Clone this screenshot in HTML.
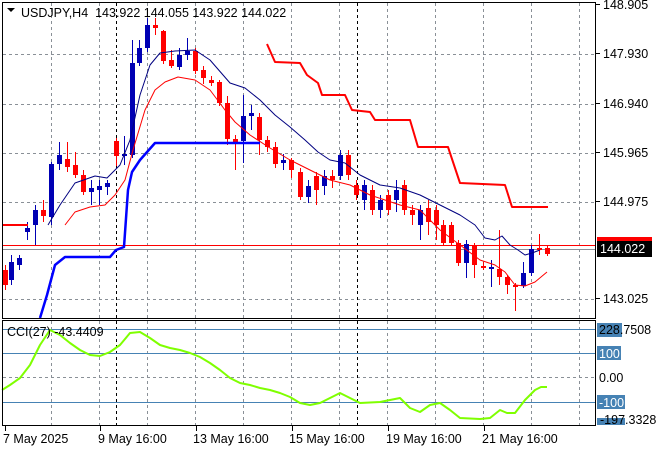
<!DOCTYPE html>
<html><head><meta charset="utf-8"><style>
html,body{margin:0;padding:0;background:#fff;width:660px;height:450px;overflow:hidden}
svg{display:block;font-family:"Liberation Sans",sans-serif}
</style></head><body>
<svg id="s" width="660" height="450" xmlns="http://www.w3.org/2000/svg">
<rect width="660" height="450" fill="#fff"/>
<g id="grid" stroke="#8a9097" stroke-width="1" stroke-dasharray="3,3"></g>
<g id="chart"></g>
<rect x="2.5" y="2.5" width="593" height="316" fill="none" stroke="#000"/>
<rect x="2.5" y="320.5" width="593" height="105" fill="none" stroke="#000"/>
<text x="21" y="17" font-size="12.5" fill="#000">USDJPY,H4&#160;&#160;143.922 144.055 143.922 144.022</text>
<path d="M7 8 L15 8 L11 12 Z" fill="#000"/>
<text x="7" y="336" font-size="12.5" fill="#000">CCI(27) -43.4409</text>
<g font-size="12.5" fill="#000" id="ax"></g>
</svg>
<script>
const NS="http://www.w3.org/2000/svg";
function el(p,t,a){const e=document.createElementNS(NS,t);for(const k in a)e.setAttribute(k,a[k]);p.appendChild(e);return e;}
const g=document.getElementById('grid'),c=document.getElementById('chart'),ax=document.getElementById('ax');
for(let x=51;x<596;x+=48){el(g,'line',{x1:x+.5,y1:3,x2:x+.5,y2:318});el(g,'line',{x1:x+.5,y1:321,x2:x+.5,y2:425});}
[54,104,153,202,299].forEach(y=>el(g,'line',{x1:3,y1:y+.5,x2:595,y2:y+.5}));
el(g,'line',{x1:3,y1:377.5,x2:595,y2:377.5});
[116,357].forEach(x=>{el(c,'line',{x1:x+.5,y1:3,x2:x+.5,y2:318,stroke:'#000','stroke-dasharray':'3,3'});el(c,'line',{x1:x+.5,y1:321,x2:x+.5,y2:425,stroke:'#000','stroke-dasharray':'3,3'});});
[329,353,402,425].forEach(y=>el(c,'line',{x1:3,y1:y+.5,x2:595,y2:y+.5,stroke:'#4682b4'}));
el(c,'line',{x1:3,y1:249.5,x2:595,y2:249.5,stroke:'#8a9097'});
el(c,'line',{x1:3,y1:245.5,x2:595,y2:245.5,stroke:'#ff0000'});
// candles x,o,c,h,l (y px)
const K=[[5,270,285,265,290],[11,280,262,255,285],[19,265,258,255,270],[27,232,228,222,240],[35,225,210,205,245],[43,210,216,200,222],[51,217,164,162,225],[59,164,155,142,170],[67,159,167,142,172],[75,165,175,152,178],[83,175,192,170,195],[91,192,188,180,205],[99,190,186,180,205],[107,187,183,180,195],[116,141,156,138,166],[124,156,154,136,165],[132,155,63,40,158],[139,63,48,40,66],[147,48,25,18,52],[155,25,28,18,35],[163,31,61,30,64],[171,60,66,50,68],[179,67,55,48,70],[187,55,51,38,60],[195,51,71,48,74],[203,70,78,66,84],[211,80,83,76,86],[219,82,103,80,106],[227,103,139,96,145],[235,139,142,135,170],[243,141,116,95,163],[251,116,113,105,130],[259,117,140,113,155],[267,140,147,136,152],[275,147,164,142,168],[283,163,160,154,170],[291,160,170,158,178],[300,172,197,168,200],[308,197,186,180,203],[316,176,190,172,205],[324,186,176,170,195],[332,176,180,170,188],[340,176,155,150,180],[348,155,175,150,180],[356,185,195,180,200],[364,200,185,180,210],[372,190,210,185,215],[380,210,200,195,218],[388,195,210,190,215],[396,200,190,180,212],[404,185,210,180,215],[412,210,215,205,225],[420,225,210,205,240],[428,208,222,200,235],[436,210,225,205,240],[443,225,243,220,245],[451,225,243,222,246],[458,243,263,240,266],[466,263,244,240,278],[474,245,265,243,278],[483,266,268,262,270],[491,268,267,260,287],[499,269,277,230,285],[507,277,285,275,294],[515,285,286,283,311],[523,286,273,262,288],[531,273,249,245,276],[539,248,249,234,255],[547,248,254,246,256]];
K.forEach(k=>{const[x,o,cl,h,l]=k;const up=cl<o;const col=up?'#0000b4':'#ff0000';
el(c,'line',{x1:x+.5,y1:h,x2:x+.5,y2:l,stroke:col});
const t=Math.min(o,cl),b=Math.max(o,cl);el(c,'rect',{x:x-2,y:t,width:5,height:Math.max(b-t,2),fill:col});});
function pl(pts,col,w){el(c,'polyline',{points:pts.map(p=>p.join(',')).join(' '),fill:'none',stroke:col,'stroke-width':w,'stroke-linejoin':'round'});}
pl([[48,225],[60,205],[75,183],[95,176],[107,178],[120,165],[130,140],[140,95],[150,65],[160,53],[175,51],[195,50],[210,60],[230,83],[245,88],[260,100],[275,115],[290,127],[305,140],[318,152],[330,160],[345,163],[360,175],[380,185],[400,188],[420,195],[440,205],[460,215],[475,225],[485,238],[495,240],[502,236],[510,245],[518,250],[525,255],[532,253],[540,250]],'#000080',1);
pl([[65,225],[75,212],[90,207],[105,205],[115,195],[125,180],[133,150],[145,110],[155,90],[165,82],[178,77],[195,80],[210,90],[225,110],[235,122],[250,135],[270,148],[290,160],[310,170],[330,180],[350,185],[370,195],[400,205],[420,210],[440,230],[460,245],[480,260],[495,265],[505,272],[515,285],[525,286],[535,282],[547,272]],'#ff0000',1);
pl([[40,318],[47,295],[55,265],[65,257],[110,257],[116,250],[124,247],[128,190],[132,172],[140,160],[155,143],[260,143]],'#0000ff',2.5);
pl([[267,44],[275,62],[300,63],[307,75],[318,83],[322,95],[345,95],[352,110],[370,112],[375,120],[410,120],[418,147],[448,147],[460,183],[505,185],[512,207],[548,207]],'#ff0000',2);
pl([[2,225],[28,225]],'#ff0000',2);
pl([[2,390],[10,385],[20,378],[30,365],[40,345],[50,330],[60,335],[70,343],[80,350],[90,355],[100,356],[110,352],[120,345],[130,333],[140,332],[150,338],[160,345],[170,348],[180,350],[190,353],[200,357],[210,363],[220,370],[230,378],[240,383],[250,385],[260,388],[270,390],[280,393],[290,397],[300,403],[310,405],[320,403],[330,398],[340,393],[350,398],[360,403],[380,402],[400,398],[410,408],[420,412],[430,405],[440,403],[450,410],[460,418],[480,419],[490,418],[500,410],[507,413],[515,413],[525,400],[535,390],[541,387],[547,387]],'#7fff00',2);
// axis labels
[[148.905,9],[147.930,58],[146.940,108],[145.965,157],[144.975,206],[143.025,303]].forEach(a=>{el(ax,'line',{x1:596,y1:a[1]-4.5,x2:600,y2:a[1]-4.5,stroke:'#000'});const t=el(ax,'text',{x:603,y:a[1]});t.textContent=a[0].toFixed(3);});
el(ax,'rect',{x:597,y:237,width:55,height:5,fill:'#ff0000'});
el(ax,'rect',{x:597,y:241,width:55,height:16,fill:'#000'});
let t=el(ax,'text',{x:600,y:253,fill:'#fff'});t.textContent='144.022';
el(ax,'rect',{x:597,y:323,width:25,height:14,fill:'#4682b4'});
t=el(ax,'text',{x:599,y:334});t.textContent='228.7508';
el(ax,'rect',{x:597,y:346,width:24,height:14,fill:'#4682b4'});
t=el(ax,'text',{x:599,y:358,fill:'#fff'});t.textContent='100';
t=el(ax,'text',{x:599,y:382});t.textContent='0.00';
el(ax,'rect',{x:597,y:395,width:28,height:14,fill:'#4682b4'});
t=el(ax,'text',{x:599,y:407,fill:'#fff'});t.textContent='-100';
el(ax,'rect',{x:597,y:418,width:28,height:7,fill:'#4682b4'});
t=el(ax,'text',{x:600,y:424});t.textContent='-197.3328';
[['7 May 2025',3,5],['9 May 16:00',98,100],['13 May 16:00',193,196],['15 May 16:00',289,292],['19 May 16:00',386,388],['21 May 16:00',482,484]].forEach(a=>{el(ax,'line',{x1:a[2]+.5,y1:426,x2:a[2]+.5,y2:431,stroke:'#000'});const tt=el(ax,'text',{x:a[1],y:443});tt.textContent=a[0];});
</script>
</body></html>
